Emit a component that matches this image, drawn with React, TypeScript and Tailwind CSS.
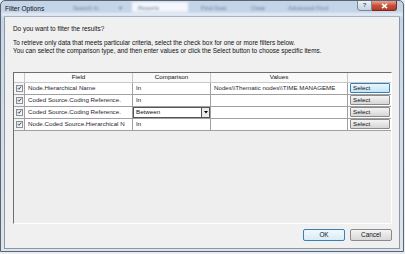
import React from "react";

const font = { fontFamily: '"Liberation Sans", Arial, sans-serif' };

function Check() {
  return (
    <div className="w-[7px] h-[7px] border border-[#8e8f8f] bg-gradient-to-br from-[#dcdcdc] to-[#ffffff] flex items-center justify-center">
      <svg width="6" height="6" viewBox="0 0 6 6">
        <path d="M1 3.2 L2.4 4.6 L5 1.2" stroke="#1c3f94" strokeWidth="1.1" fill="none" />
      </svg>
    </div>
  );
}

function SelectBtn({ focus }: { focus?: boolean }) {
  return (
    <div
      className={
        "h-[10px] w-[40px] ml-[2px] rounded-[1px] border flex items-center pl-[2px] text-[6.2px] text-[#111] " +
        (focus
          ? "border-[#3c7fb1] bg-gradient-to-b from-[#eaf6fd] to-[#c4e5f6]"
          : "border-[#8a8a8a] bg-gradient-to-b from-[#f4f4f4] to-[#d6d6d6]")
      }
    >
      Select
    </div>
  );
}

const rows = [
  { field: "Node.Hierarchical Name", cmp: "In", val: "Nodes\\\\Thematic nodes\\\\TIME MANAGEME", focus: true },
  { field: "Coded Source.Coding Reference.", cmp: "In", val: "" },
  { field: "Coded Source.Coding Reference.", cmp: "Between", val: "", combo: true },
  { field: "Node.Coded Source.Hierarchical N", cmp: "In", val: "" },
];

export default function App() {
  return (
    <div className="w-[405px] h-[254px] bg-[#e9edf2] overflow-hidden" style={font}>
      <div className="w-[404px] h-[252px] border border-[#5b636d] rounded-t-[5px] bg-gradient-to-b from-[#c3d4e9] via-[#d3deea] to-[#dde4ec] flex flex-col relative overflow-hidden">
        {/* title bar */}
        <div className="h-[15px] relative flex items-center shrink-0">
          <div className="absolute inset-0 blur-[1.3px] text-[6px] text-[#6a7a92]">
            <span className="absolute left-[72px] top-[3px]">Search In</span>
            <span className="absolute left-[118px] top-[3px]">▾</span>
            <span className="absolute left-[131px] top-[1px] w-[56px] h-[10px] bg-[#f4f7fb]" />
            <span className="absolute left-[137px] top-[3px]">Reports</span>
            <span className="absolute left-[200px] top-[3px]">Find Now</span>
            <span className="absolute left-[250px] top-[3px]">Clear</span>
            <span className="absolute left-[287px] top-[3px]">Advanced Find</span>
            <span className="absolute left-[0px] right-0 top-[12px] h-[3px] bg-[#e6ecf3]" />
          </div>
          <span className="relative ml-[4px] text-[6.6px] text-[#111]">Filter Options</span>
          <div className="absolute top-[-1px] right-[6px] flex">
            <div className="w-[15px] h-[11px] rounded-bl-[3px] border border-[#7d8896] bg-gradient-to-b from-[#eef2f8] to-[#c4d1e0] flex items-center justify-center text-[6px] text-[#4a5565] font-bold">
              ?
            </div>
            <div className="w-[25px] h-[11px] rounded-br-[3px] border border-l-0 border-[#7a2a22] bg-gradient-to-b from-[#e8a494] via-[#c9503b] to-[#b33a26] flex items-center justify-center">
              <svg width="7" height="6" viewBox="0 0 7 6">
                <path d="M1 0.8 L6 5.2 M6 0.8 L1 5.2" stroke="#fff" strokeWidth="1.6" />
              </svg>
            </div>
          </div>
        </div>

        {/* client area */}
        <div className="flex-1 mx-[3px] mb-[2px] border border-[#8b97a6] bg-[#f0f0f0] flex flex-col text-[#111]">
          <div className="pl-[8px] pt-[8px] text-[6.4px] leading-[8.5px]">
            <div>Do you want to filter the results?</div>
            <div className="mt-[5px]">
              To retrieve only data that meets particular criteria, select the check box for one or more filters below.
            </div>
            <div>
              You can select the comparison type, and then enter values or click the Select button to choose specific items.
            </div>
          </div>

          {/* grid */}
          <div className="ml-[8px] mr-[7px] mt-[16px] h-[152px] border-l border-t border-[#6e6e6e] border-r-white border-b-white border-r border-b bg-[#eeeeee] text-[6.2px]">
            <div className="grid grid-cols-[11px_108px_78px_137px_43px]">
              {/* header */}
              <div className="h-[10px] bg-[#f9f9f9] border-r border-b border-[#c8c8c8]" />
              <div className="h-[10px] bg-[#f9f9f9] border-r border-b border-[#c8c8c8] flex items-center justify-center">Field</div>
              <div className="h-[10px] bg-[#f9f9f9] border-r border-b border-[#c8c8c8] flex items-center justify-center">Comparison</div>
              <div className="h-[10px] bg-[#f9f9f9] border-r border-b border-[#c8c8c8] flex items-center justify-center">Values</div>
              <div className="h-[10px] bg-[#f9f9f9] border-b border-[#c8c8c8]" />
              {rows.map((r, i) => (
                <React.Fragment key={i}>
                  <div className="h-[12px] bg-[#f4f4f4] border-r border-b border-[#a0a0a0] flex items-center justify-center">
                    <Check />
                  </div>
                  <div className="h-[12px] bg-white border-r border-b border-[#a0a0a0] flex items-center pl-[3px] overflow-hidden whitespace-nowrap text-[#2a1e2e]">
                    {r.field}
                  </div>
                  {r.combo ? (
                    <div className="h-[12px] bg-white border-b border-r border-[#a0a0a0] flex">
                      <div className="flex-1 border border-[#555] border-r-0 flex items-center pl-[2px]">{r.cmp}</div>
                      <div className="w-[9px] border border-[#555] bg-[#ececec] flex items-center justify-center">
                        <svg width="4" height="3" viewBox="0 0 4 3">
                          <path d="M0 0 L4 0 L2 2.5 Z" fill="#000" />
                        </svg>
                      </div>
                    </div>
                  ) : (
                    <div className="h-[12px] bg-white border-r border-b border-[#a0a0a0] flex items-center pl-[3px]">{r.cmp}</div>
                  )}
                  <div className="h-[12px] bg-white border-r border-b border-[#a0a0a0] flex items-center pl-[3px] overflow-hidden whitespace-nowrap text-[#2a1e2e]">
                    {r.val}
                  </div>
                  <div className="h-[12px] bg-white border-b border-[#a0a0a0] flex items-center">
                    <SelectBtn focus={r.focus} />
                  </div>
                </React.Fragment>
              ))}
            </div>
          </div>

          {/* buttons */}
          <div className="flex justify-end gap-[5px] mt-[5px] pr-[7px] text-[6.4px]">
            <div className="w-[42px] h-[12px] rounded-[2px] border border-[#3c7fb1] bg-gradient-to-b from-[#f2f9fd] to-[#d7ecf8] flex items-center justify-center">
              OK
            </div>
            <div className="w-[42px] h-[12px] rounded-[2px] border border-[#8a8a8a] bg-gradient-to-b from-[#f4f4f4] to-[#d8d8d8] flex items-center justify-center">
              Cancel
            </div>
          </div>
        </div>
      </div>
    </div>
  );
}
